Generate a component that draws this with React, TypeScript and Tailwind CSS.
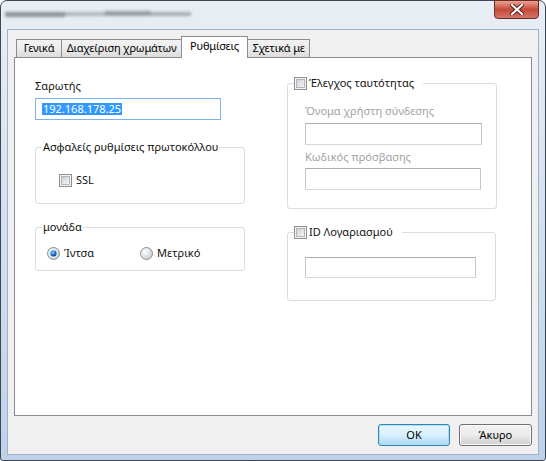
import React from "react";

const FONT = "font-['Noto_Sans','Open_Sans',sans-serif]";

function CheckBox() {
    return (
        <svg width="13" height="13" viewBox="0 0 13 13" className="shrink-0">
            <defs>
                <linearGradient id="cbg" x1="0" y1="0" x2="1" y2="1">
                    <stop offset="0" stopColor="#cbcfd5" />
                    <stop offset="1" stopColor="#f7f7f7" />
                </linearGradient>
            </defs>
            <rect x="0.5" y="0.5" width="12" height="12" fill="#f4f4f4" stroke="#8e8f8f" />
            <rect x="2.5" y="2.5" width="8" height="8" fill="url(#cbg)" stroke="#b2b6bb" />
        </svg>
    );
}

function Radio({ checked }: { checked?: boolean }) {
    return (
        <svg width="13" height="13" viewBox="0 0 13 13" className="shrink-0">
            <defs>
                <radialGradient id="rbg" cx="0.35" cy="0.35" r="0.7">
                    <stop offset="0" stopColor="#ffffff" />
                    <stop offset="1" stopColor="#c9ccd1" />
                </radialGradient>
                <radialGradient id="rdot" cx="0.4" cy="0.35" r="0.7">
                    <stop offset="0" stopColor="#8ad1ff" />
                    <stop offset="0.6" stopColor="#1c6cc0" />
                    <stop offset="1" stopColor="#0c3f7a" />
                </radialGradient>
            </defs>
            <circle cx="6.5" cy="6.5" r="6" fill="url(#rbg)" stroke="#8e8f8f" />
            {checked && (
                <>
                    <circle cx="6.5" cy="6.5" r="4.2" fill="#cfe7fa" />
                    <circle cx="6.5" cy="6.5" r="3" fill="url(#rdot)" />
                </>
            )}
        </svg>
    );
}

function Tab({ label, width, selected, first }: { label: string; width: string; selected?: boolean; first?: boolean }) {
    if (selected) {
        return (
            <div
                className={`${width} h-[22px] -mb-px -ml-px z-10 flex justify-center pt-[1px] whitespace-nowrap tracking-[-0.2px] border border-b-0 border-[#898c95] bg-white text-[11px] leading-[16px] text-black`}
            >
                {label}
            </div>
        );
    }
    return (
        <div
            className={`${width} h-[18px] ${first ? "" : "-ml-px"} flex justify-center whitespace-nowrap tracking-[-0.2px] border border-b-0 border-[#898c95] bg-gradient-to-b from-[#f3f3f3] via-[#ebebeb] to-[#dcdcdc] text-[11px] leading-[16px] text-black`}
        >
            {label}
        </div>
    );
}

function GroupBox({ className, children, legend }: { className: string; children?: React.ReactNode; legend: React.ReactNode }) {
    return (
        <div className={`relative border border-[#d5dfe5] rounded-[3px] ${className}`}>
            <div className="absolute -top-[9px] left-[6px] bg-white flex items-center whitespace-nowrap">{legend}</div>
            {children}
        </div>
    );
}

function TextBox({ className, children }: { className: string; children?: React.ReactNode }) {
    return (
        <div
            className={`border border-[#abadb3] border-l-[#c5c8ce] border-r-[#c5c8ce] border-b-[#d5d8dd] bg-white ${className}`}
        >
            {children}
        </div>
    );
}

export default function App() {
    return (
        <div
            className={`w-[546px] h-[461px] flex flex-col rounded-t-[7px] rounded-b-[3px] border border-[#3d4654] bg-gradient-to-b from-[#e9eef4] via-[#d3e0ef] to-[#bfd2ea] ${FONT}`}
        >
            {/* title bar */}
            <div className="h-[28px] flex justify-between">
                <div className="mt-[9px] ml-[4px] w-[186px] h-[8px] flex blur-[1.5px]">
                    <div className="w-[60px] h-[5px] mt-[2px] bg-[#8c929a]" />
                    <div className="w-[40px] h-[4px] mt-[2px] bg-[#b0b5bb]" />
                    <div className="w-[46px] h-[5px] mt-[1px] bg-[#979ca4]" />
                    <div className="w-[40px] h-[4px] mt-[2px] bg-[#a9aeb5]" />
                </div>
                <div className="-mt-px mr-[6px] w-[45px] h-[19px] rounded-b-[4px] border border-[#6a2a25] bg-gradient-to-b from-[#e8a493] via-[#c7483a] to-[#d2766b] flex items-center justify-center">
                    <svg width="14" height="11" viewBox="0 0 14 11">
                        <path
                            d="M2 1 L12 10 M12 1 L2 10"
                            stroke="#4a1a16"
                            strokeWidth="4"
                            strokeLinecap="square"
                        />
                        <path d="M2 1 L12 10 M12 1 L2 10" stroke="#ffffff" strokeWidth="2.2" strokeLinecap="square" />
                    </svg>
                </div>
            </div>

            {/* client area */}
            <div className="flex-1 mx-[6px] mb-[5px] border border-[#a0b2c8] bg-[#f0f0f0] flex flex-col px-[6px] pt-[6px] pb-[8px]">
                {/* tabs */}
                <div className="h-[21px] flex items-end pl-[2px]">
                    <Tab label="Γενικά" width="w-[46px]" first />
                    <Tab label="Διαχείριση χρωμάτων" width="w-[121px]" />
                    <Tab label="Ρυθμίσεις" width="w-[67px]" selected />
                    <Tab label="Σχετικά με" width="w-[63px]" />
                </div>

                {/* panel */}
                <div className="h-[359px] border border-[#898c95] bg-white flex pl-[20px] text-[11px] leading-[16px] text-[#111]">
                    {/* left column */}
                    <div className="w-[210px] flex flex-col">
                        <div className="mt-[20px]">Σαρωτής</div>
                        <div className="mt-[4px] w-[186px] h-[22px] border border-[#7eb4ea] bg-white flex items-center pl-[6px]">
                            <span className="bg-[#3399ff] text-white text-[11px] leading-[12px] px-px">192.168.178.25</span>
                        </div>

                        <GroupBox
                            className="mt-[27px] h-[57px] pl-[23px] pt-[24px]"
                            legend={<span className="px-[1px]">Ασφαλείς ρυθμίσεις πρωτοκόλλου</span>}
                        >
                            <div className="flex items-center gap-[4px]">
                                <CheckBox />
                                <span>SSL</span>
                            </div>
                        </GroupBox>

                        <GroupBox className="mt-[23px] h-[44px] pl-[11px] pt-[17px]" legend={<span className="px-[1px]">μονάδα</span>}>
                            <div className="flex items-center">
                                <div className="w-[93px] flex items-center gap-[4px]">
                                    <Radio checked />
                                    <span>Ίντσα</span>
                                </div>
                                <div className="flex items-center gap-[4px]">
                                    <Radio />
                                    <span>Μετρικό</span>
                                </div>
                            </div>
                        </GroupBox>
                    </div>

                    {/* right column */}
                    <div className="ml-[42px] w-[210px] flex flex-col">
                        <GroupBox
                            className="mt-[25px] h-[126px] pl-[17px] pt-[19px] text-[#a3a3a3]"
                            legend={
                                <div className="flex items-center gap-[2px] pr-[9px] text-[#111]">
                                    <CheckBox />
                                    <span>Έλεγχος ταυτότητας</span>
                                </div>
                            }
                        >
                            <div>Όνομα χρήστη σύνδεσης</div>
                            <TextBox className="mt-[4px] w-[177px] h-[22px]" />
                            <div className="mt-[4px]">Κωδικός πρόσβασης</div>
                            <TextBox className="mt-[3px] w-[176px] h-[22px]" />
                        </GroupBox>

                        <GroupBox
                            className="mt-[23px] h-[69px] w-[209px] pl-[17px] pt-[24px]"
                            legend={
                                <div className="flex items-center gap-[2px] pr-[9px] text-[#111]">
                                    <CheckBox />
                                    <span>ID Λογαριασμού</span>
                                </div>
                            }
                        >
                            <TextBox className="w-[171px] h-[21px]" />
                        </GroupBox>
                    </div>
                </div>

                {/* buttons */}
                <div className="mt-[8px] flex justify-end gap-[9px] text-[11px]">
                    <button className="w-[72px] h-[22px] rounded-[3px] border border-[#3c7fb1] bg-gradient-to-b from-[#eaf6fd] via-[#d9f0fc] to-[#a7d9f5] shadow-[inset_0_0_0_1px_#9ee6fb] text-black">
                        OK
                    </button>
                    <button className="w-[73px] h-[22px] rounded-[3px] border border-[#707070] bg-gradient-to-b from-[#f2f2f2] via-[#ebebeb] to-[#cfcfcf] shadow-[inset_0_0_0_1px_#fcfcfc] text-black">
                        Άκυρο
                    </button>
                </div>
            </div>
        </div>
    );
}
